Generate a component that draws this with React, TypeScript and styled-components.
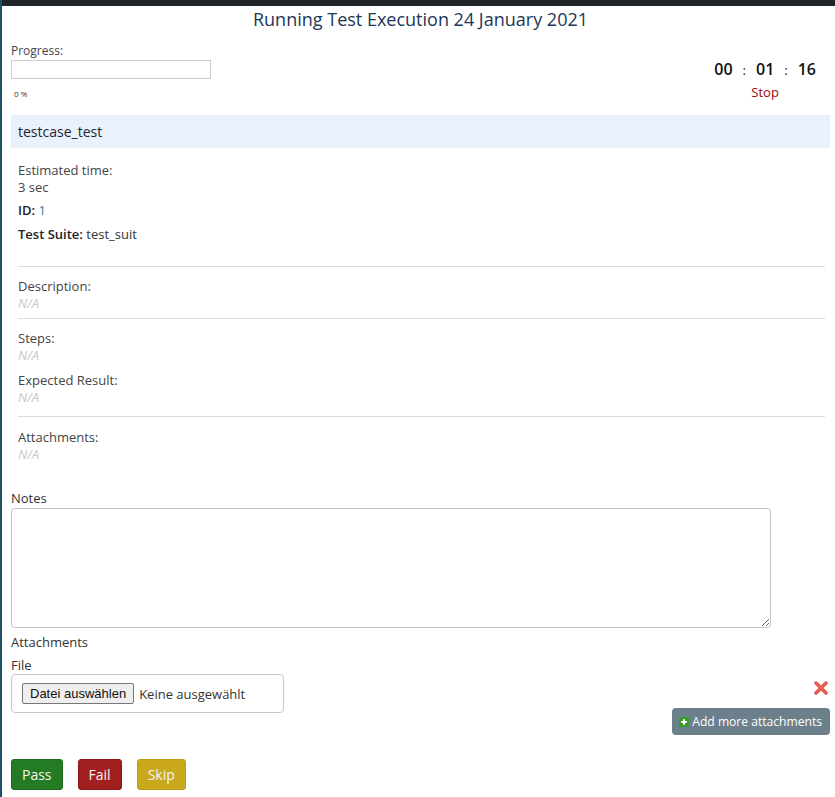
import React from "react";
import styled, { createGlobalStyle } from "styled-components";

const Global = createGlobalStyle`
  html, body { margin: 0; padding: 0; background: #fff; }
  body { font-family: "Open Sans", "Noto Sans", sans-serif; color: #333; }
  * { box-sizing: border-box; }
`;

const Page = styled.div`
  min-height: 797px;
  border-left: 2px solid #1d4f66;
  display: flex;
  flex-direction: column;
`;

const TopBar = styled.div`
  height: 6px;
  background: #212427;
`;

const Content = styled.div`
  padding: 0 5px 0 9px;
  display: flex;
  flex-direction: column;
`;

const Title = styled.h1`
  margin: 1px 0 0;
  font-size: 18px;
  font-weight: 400;
  line-height: 24px;
  text-align: center;
  color: #1c3658;
`;

const TopRow = styled.div`
  display: flex;
  justify-content: space-between;
  margin-top: 11px;
  height: 69px;
`;

const ProgressCol = styled.div`
  display: flex;
  flex-direction: column;
`;

const SmallLabel = styled.div`
  font-size: 12px;
  line-height: 17px;
  color: #444;
`;

const ProgressBox = styled.div`
  width: 200px;
  height: 19px;
  border: 1px solid #ccc;
  margin-top: 1px;
`;

const Percent = styled.div`
  font-size: 8px;
  color: #333;
  margin: 9px 0 0 3px;
`;

const TimerCol = styled.div`
  display: flex;
  flex-direction: column;
  align-items: center;
  padding: 17px 14px 0 0;
`;

const Timer = styled.div`
  font-size: 16px;
  font-weight: 600;
  color: #111;
  line-height: 20px;
  span { font-size: 13px; font-weight: 400; margin: 0 10px; }
`;

const StopLink = styled.a`
  font-size: 13px;
  color: #9b0a0a;
  margin-top: 3px;
  text-decoration: none;
`;

const CaseHeader = styled.div`
  margin-top: 4px;
  height: 33px;
  background: #e9f1fc;
  font-size: 14px;
  color: #1d2630;
  padding: 0 7px;
  display: flex;
  align-items: center;
`;

const Details = styled.div`
  padding: 14px 5px 0 7px;
  display: flex;
  flex-direction: column;
`;

const Label = styled.div`
  font-size: 13px;
  line-height: 17px;
  color: #444;
`;

const Value = styled.div<{ $na?: boolean }>`
  font-size: 13px;
  line-height: 17px;
  color: ${(p) => (p.$na ? "#c8c8c8" : "#444")};
  font-style: ${(p) => (p.$na ? "italic" : "normal")};
`;

const Field = styled.div<{ $gap?: number }>`
  font-size: 13px;
  line-height: 17px;
  color: #333;
  margin-top: ${(p) => p.$gap ?? 6}px;
  b { font-weight: 600; color: #222; }
`;

const Blue = styled.span`
  color: #3a7d9e;
`;

const Rule = styled.hr<{ $top: number }>`
  border: 0;
  border-top: 1px solid #dcdcdc;
  margin: ${(p) => p.$top}px 0 11px;
`;

const Block = styled.div<{ $gap?: number }>`
  margin-top: ${(p) => p.$gap ?? 0}px;
  display: flex;
  flex-direction: column;
`;

const Form = styled.div`
  margin-top: 27px;
  display: flex;
  flex-direction: column;
`;

const FormLabel = styled.div`
  font-size: 13px;
  line-height: 17px;
  color: #333;
`;

const Notes = styled.textarea`
  width: 760px;
  height: 120px;
  margin-top: 1px;
  border: 1px solid #c4c4c4;
  border-radius: 4px;
  resize: both;
  font-family: inherit;
`;

const AttachLabel = styled(FormLabel)`
  margin-top: 6px;
`;

const FileLabel = styled(FormLabel)`
  margin-top: 6px;
`;

const FileRow = styled.div`
  display: flex;
  align-items: flex-start;
  justify-content: space-between;
`;

const FileBox = styled.div`
  width: 273px;
  height: 39px;
  border: 1px solid #c8c8c8;
  border-radius: 4px;
  display: flex;
  align-items: center;
  padding-left: 10px;
  gap: 5px;
`;

const FileButton = styled.button`
  font-family: "Liberation Sans", Arial, sans-serif;
  font-size: 13px;
  color: #111;
  background: #efefef;
  border: 1px solid #767676;
  border-radius: 2px;
  height: 21px;
  padding: 0 7px;
`;

const FileText = styled.span`
  font-size: 13px;
  color: #333;
`;

const RightCol = styled.div`
  display: flex;
  flex-direction: column;
  align-items: flex-end;
  padding-top: 4px;
`;

const Remove = styled.span`
  display: block;
  margin-right: 2px;
  height: 14px;
`;

const AddButton = styled.button`
  margin-top: 16px;
  height: 27px;
  padding: 0 8px 0 7px;
  background: #6c808b;
  border: 0;
  border-radius: 4px;
  color: #fff;
  font-family: inherit;
  font-size: 12.1px;
  display: flex;
  align-items: center;
  gap: 3px;
`;

const Actions = styled.div`
  display: flex;
  gap: 15px;
  margin-top: 24px;
`;

const ActionButton = styled.button<{ $bg: string; $border: string }>`
  height: 31px;
  padding: 0 10px;
  background: ${(p) => p.$bg};
  border: 1px solid ${(p) => p.$border};
  border-radius: 3px;
  color: #f4f4f4;
  font-family: inherit;
  font-size: 14px;
`;

const RedX = () => (
  <svg width="14" height="14" viewBox="0 0 14 14">
    <path d="M2 2 L12 12 M12 2 L2 12" stroke="#e0443e" strokeWidth="3.4" strokeLinecap="round" />
    <path d="M2 2 L12 12 M12 2 L2 12" stroke="#f26b63" strokeWidth="1.4" strokeLinecap="round" />
  </svg>
);

const PlusSquare = () => (
  <svg width="10" height="10" viewBox="0 0 10 10">
    <rect x="0" y="0" width="10" height="10" rx="1.5" fill="#3c9a2c" />
    <path d="M5 2.2 V7.8 M2.2 5 H7.8" stroke="#fff" strokeWidth="2" />
  </svg>
);

export default function App() {
  return (
    <>
      <Global />
      <Page>
        <TopBar />
        <Content>
          <Title>Running Test Execution 24 January 2021</Title>
          <TopRow>
            <ProgressCol>
              <SmallLabel>Progress:</SmallLabel>
              <ProgressBox />
              <Percent>0 %</Percent>
            </ProgressCol>
            <TimerCol>
              <Timer>
                00<span>:</span>01<span>:</span>16
              </Timer>
              <StopLink href="#">Stop</StopLink>
            </TimerCol>
          </TopRow>
          <CaseHeader>testcase_test</CaseHeader>
          <Details>
            <Label>Estimated time:</Label>
            <Value>3 sec</Value>
            <Field>
              <b>ID:</b> <Blue>1</Blue>
            </Field>
            <Field $gap={7}>
              <b>Test Suite:</b> test_suit
            </Field>
            <Rule $top={23} />
            <Block>
              <Label>Description:</Label>
              <Value $na>N/A</Value>
            </Block>
            <Rule $top={6} />
            <Block>
              <Label>Steps:</Label>
              <Value $na>N/A</Value>
            </Block>
            <Block $gap={8}>
              <Label>Expected Result:</Label>
              <Value $na>N/A</Value>
            </Block>
            <Rule $top={10} />
            <Block $gap={1}>
              <Label>Attachments:</Label>
              <Value $na>N/A</Value>
            </Block>
          </Details>
          <Form>
            <FormLabel>Notes</FormLabel>
            <Notes />
            <AttachLabel>Attachments</AttachLabel>
            <FileLabel>File</FileLabel>
            <FileRow>
              <FileBox>
                <FileButton>Datei auswählen</FileButton>
                <FileText>Keine ausgewählt</FileText>
              </FileBox>
              <RightCol>
                <Remove>
                  <RedX />
                </Remove>
                <AddButton>
                  <PlusSquare />
                  Add more attachments
                </AddButton>
              </RightCol>
            </FileRow>
            <Actions>
              <ActionButton $bg="#237b23" $border="#1d6b1d">Pass</ActionButton>
              <ActionButton $bg="#a21f1f" $border="#8f1717">Fail</ActionButton>
              <ActionButton $bg="#c9a81e" $border="#bb9c18">Skip</ActionButton>
            </Actions>
          </Form>
        </Content>
      </Page>
    </>
  );
}
